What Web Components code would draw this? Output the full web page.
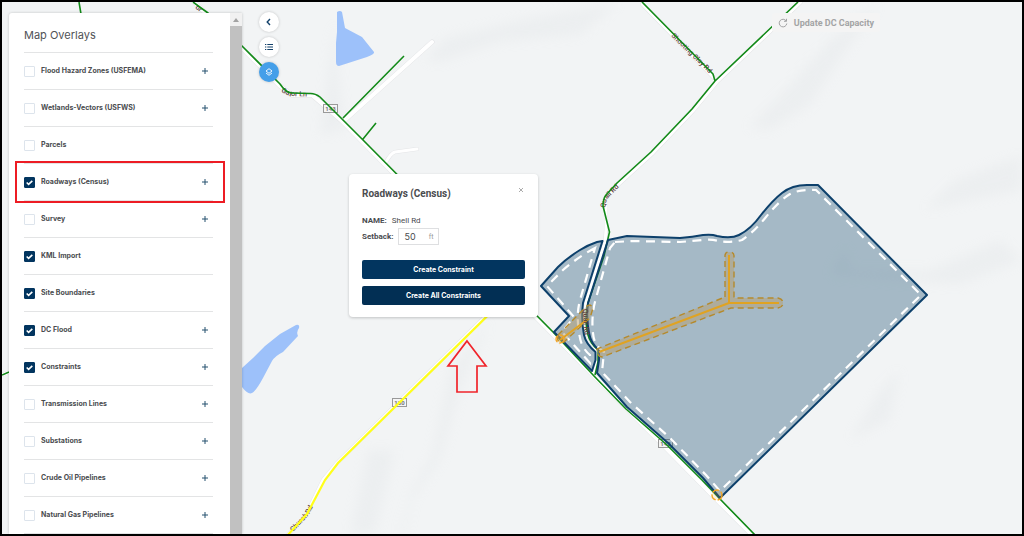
<!DOCTYPE html>
<html lang="en">
<head>
<meta charset="utf-8">
<title>Map Overlays</title>
<style>
html, body { margin: 0; height: 100%; }
body { font-family: Inter, "Liberation Sans", sans-serif; color: #4a4c4f; background: #000; overflow: hidden; }
</style>
</head>
<body>
<map-app></map-app>
<script>
const define = (name, markup, setup) => {
  const template = document.createElement('template');
  template.innerHTML = markup;
  customElements.define(name, class extends HTMLElement {
    constructor() {
      super();
      this.attachShadow({ mode: 'open' }).append(template.content.cloneNode(true));
    }
    connectedCallback() { if (setup) setup(this, this.shadowRoot); }
  });
};

/* Base map: water, roads, labels, site boundary and constraints */
define('site-map', `
<style>
:host { display: block; background: #f2f4f5; }
svg { display: block; width: 100%; height: 100%; }
.case { fill: none; stroke: #e4e5e7; stroke-width: 5; stroke-linejoin: round; stroke-linecap: round; }
.fill { fill: none; stroke: #fff; stroke-width: 4; stroke-linejoin: round; stroke-linecap: round; }
.thin .case { stroke-width: 4; }
.thin .fill { stroke-width: 3; }
.road { fill: none; stroke: #128a18; stroke-width: 1.6; stroke-linejoin: round; }
.water { fill: #9dc1fa; }
.site { fill: #0a4468; fill-opacity: .33; stroke: #0d406b; stroke-width: 2; stroke-linejoin: round; }
.inset { fill: none; stroke: #fff; stroke-width: 2.2; stroke-dasharray: 9 6.500; }
.zone { fill: #b8a070; fill-opacity: .5; stroke: #b58a2c; stroke-width: 1.4; stroke-dasharray: 6 4; }
.line { fill: none; stroke: #e0a322; stroke-width: 2; }
.ring { fill: #f5a623; fill-opacity: .15; stroke: #f5a623; stroke-width: 1.4; stroke-dasharray: 7 2; }
.label { font: 500 7px Roboto, sans-serif; fill: #5d4040; }
.shield rect { fill: #f5f5f5; stroke: #999; }
.shield text { font: 700 6px Roboto, sans-serif; fill: #777; text-anchor: middle; }
.shade { fill: #d3d8db; filter: url(#soft); opacity: .18; }
</style>
<svg viewBox="2 2 1020 532" preserveAspectRatio="xMinYMin slice" role="img" aria-label="Site map">
<defs>
<filter id="soft" x="-50%" y="-50%" width="200%" height="200%"><feGaussianBlur stdDeviation="6"/></filter>
<path id="gator" d="M281 92 L290 96 L322 97"/>
<path id="shoot" d="M671 36 L718 82"/>
<path id="quail" d="M605 208 L607 199 L627 179"/>
<path id="quail2" d="M583 309 L584 330 L588 345"/>
<path id="church" d="M293 532 L309 515 L324 484"/>
</defs>
<g class="shade">
<path d="M425 60 L445 38 L520 20 L620 2 L580 35 L500 42 L440 62Z"/>
<path d="M748 128 L790 85 L830 40 L880 2 L850 45 L810 105 L770 130Z"/>
<path d="M400 534 L412 490 L432 455 L450 370 L490 320 L460 390 L440 460 L412 500 L405 534Z"/>
<path d="M350 534 L368 450 L395 450 L375 534Z"/>
<path d="M830 275 L846 245 L850 270 L930 270 L1000 240 L1022 260 L960 285 L890 280Z"/>
<path d="M925 210 L955 180 L1022 155 L1022 190 L950 205Z"/>
<path d="M850 440 L880 390 L900 370 L890 420Z"/>
<path d="M320 135 L335 20 L340 90 L345 130Z"/>
</g>
<path class="water" d="M337 12 Q340 10 342 12 L345 28 L362 37 L374 52 Q375 54 367 57 L339 66 Q336 66 336 62 V43 L337 32Z"/>
<path class="water" d="M225 382 L242 368 L253 358 L265 346 L280 334 L296 325 Q300 324 299 328 Q296 332 298 336 L283 352 Q275 356 272 361 L263 378 Q256 391 252 393 Q248 395 242 387Z"/>
<path class="case" d="M192 0 L242 48 L280 86 L292 95 L312 95 L342 121 L594 376 L626 408 L662 444 L720 503 L755 538 M346 119 L432 42"/>
<g class="thin"><path class="case" d="M386 162 Q391 153 395 152 L417 149 M642 4 L714 78 M801 2 L717 82 L693 111 L652 154 L618 185 L606 198 L606 230 L605 242 L586 303 L585 320 L588 336 L597 351 V360 L594 372 M500 302 L337 463 L323 480 L306 515 L286 537 M2 375 L9 372"/></g>
<path class="fill" d="M192 0 L242 48 L280 86 L292 95 L312 95 L342 121 L594 376 L626 408 L662 444 L720 503 L755 538 M346 119 L432 42"/>
<g class="thin"><path class="fill" d="M386 162 Q391 153 395 152 L417 149 M642 4 L714 78 M801 2 L717 82 L693 111 L652 154 L618 185 L606 198 L606 230 L605 242 L586 303 L585 320 L588 336 L597 351 V360 L594 372 M500 302 L337 463 L323 480 L306 515 L286 537 M2 375 L9 372"/></g>
<g class="shield">
<g><rect x="323.500" y="104.500" width="14" height="8"/><text x="330.500" y="111">143</text></g>
<g><rect x="392.500" y="398.500" width="14" height="8"/><text x="399.500" y="405">130</text></g>
<g><rect x="658.500" y="439.500" width="14" height="8"/><text x="665.500" y="446">143</text></g>
</g>
<g class="label">
<text><textPath href="#gator">Gator Ln</textPath></text>
<text><textPath href="#shoot">Shooting Clay Rd</textPath></text>
<text><textPath href="#quail">Quail Rd</textPath></text>
<text><textPath href="#church">Church Rd</textPath></text>
<text x="195" y="8" transform="rotate(40 195 8)">or</text>
</g>
<path class="road" d="M193 2 L208 13 L242 46 L280 84 Q286 93 292 93 L309 93.500 Q315 93 320 97 L342 119 L363 140 L553 332 L594 376 L626 409 L667 445 L702 480 L720 499 L756 536 M343 118 L404 56 M363 139 L376 123 M642 2 L713 74 L715 81 M798 2 L715 81 L692 109 L651 152 L617 183 L606 195 Q603 199 603 206 L609.500 232 L604 256 L588 303 Q584 320 588 335 Q590 343 598 350 V362 L595 375 M2 375 L9 372 M79 2 L82 20"/>
<path class="site" d="M602.500 241 L597 242 Q588 245 580 250 Q567 258 558 267 L541 286 L569 316 L554 332 L592 371 L595.500 360 V352 Q586 344 584 335 Q581 320 583 303Z"/>
<path class="site" d="M608 240 L627 236 L680 238 Q693 237 703 235 Q712 234 717 236 Q731 239 739 235 Q751 229 761 215 Q773 200 782 193 Q792 185 807 185 L818 185 L927 295 L720 498 L703 478 L668 443 L627 407 L597 373 L599 360 V350 Q591 344 589 333 Q586 318 588 303Z"/>
<path class="inset" d="M595 248 Q578 257 563 270 L547 286 L574 317 L562 332 L590 363 V355 Q580 347 579 331 Q576 315 580 300Z"/>
<path class="inset" d="M615 242 L633 241 L680 242 L703 240 Q712 239 718 241 Q730 243 742 240 Q754 232 766 217 Q780 200 790 194 Q800 189 816 190 L921 295 L720 491 L706 475 L670 438 L630 402 L602 372 L604 352 Q594 346 593 333 Q591 315 596 298 L610 248Z"/>
<path class="zone" d="M725 297 V256 Q725 252 729 252 Q734 252 734 256 V298 H778 Q783 299 783 303 Q783 307 778 308 H731 L602 357 Q596 356 597 349Z"/>
<path class="zone" d="M558 335 L585 308 Q590 302 593 308 L590 318 L564 342 Q556 344 558 335Z"/>
<path class="line" d="M599 352 L729 303 V255 M729 303 H779 M560 340 L588 319"/>
<circle class="ring" cx="560" cy="339" r="4"/><circle class="ring" cx="717" cy="495" r="5"/>
<text class="label"><textPath href="#quail2">Quail Rd</textPath></text>
<path d="M537 267 L338 463 L325 480 L307 514 L286 537" fill="none" stroke="#ffff1a" stroke-width="2.2"/>
<path d="M467 341 L486 366 H477 V392 H457 V366 H448Z" fill="none" stroke="#f0242b" stroke-width="1.700"/>
</svg>`);

/* One overlay row: tick box, name and, if expandable, a plus button */
define('overlay-item', `
<style>
:host { display: flex; align-items: center; position: relative; height: 36px; border-bottom: 1px solid #e3e4e5; }
label { display: flex; align-items: center; gap: 6px; flex: 1; font-size: 7px; font-weight: 700; line-height: 10px; }
input { appearance: none; box-sizing: border-box; width: 11px; height: 11px; margin: 0; border: 1px solid #dde4ec; border-radius: 1px; background: #fff; }
input:checked { border-color: #02355f; background: #02355f url("data:image/svg+xml,%3Csvg xmlns='http://www.w3.org/2000/svg' viewBox='0 0 8 8'%3E%3Cpath d='M1.500 4l1.700 1.700L6.500 2.500' fill='none' stroke='white' stroke-width='1.400'/%3E%3C/svg%3E"); }
button { width: 16px; height: 16px; padding: 0; border: 0; background: none; display: grid; place-items: center; }
button[hidden] { display: none; }
:host([highlighted])::after { content: ""; position: absolute; inset: -3px -12px -3px -9px; border: 2px solid #ed1c24; pointer-events: none; }
</style>
<label><input type="checkbox"><span><slot></slot></span></label>
<button type="button" aria-label="Expand"><svg width="6" height="6" viewBox="0 0 6 6"><path d="M3 0V6M0 3H6" stroke="#25516f"/></svg></button>`,
(el, root) => {
  root.querySelector('input').checked = el.hasAttribute('checked');
  root.querySelector('button').hidden = !el.hasAttribute('expandable');
});

define('overlay-panel', `
<style>
:host { display: flex; background: #fff; border-radius: 3px 0 0 0; box-shadow: 0 0 3px #0003; overflow: hidden; }
.list { flex: 1; padding: 14px 17px 0 15px; }
h1 { margin: 0; padding-bottom: 9px; font-size: 11px; line-height: 16px; font-weight: 400; color: #505256; border-bottom: 1px solid #e3e4e5; }
.bar { width: 12px; background: #c1c1c1; }
.up { height: 13px; background: #f1f1f1; display: grid; place-items: center; }
</style>
<div class="list"><h1>Map Overlays</h1><slot></slot></div>
<div class="bar"><div class="up"><svg width="6" height="4" viewBox="0 0 6 4"><path d="M0 4L3 0L6 4Z" fill="#a3a3a3"/></svg></div></div>`);

define('round-button', `
<style>
:host { display: block; }
button { display: grid; place-items: center; width: 20px; height: 20px; padding: 0; border: 0; border-radius: 50%; background: #fff; color: #14426b; box-shadow: 0 0 3px #0003; }
:host([active]) button { background: #459fe9; color: #fff; }
</style>
<button type="button"><slot></slot></button>`,
(el, root) => root.querySelector('button').setAttribute('aria-label', el.getAttribute('name')));

define('update-button', `
<style>
:host { display: block; }
button { display: flex; align-items: center; gap: 6px; height: 19px; padding: 0 6px; border: 0; border-radius: 3px; background: #f4f4f4; color: #a3a4a5; font: 700 9px Roboto, sans-serif; }
</style>
<button type="button" disabled><svg width="10" height="10" viewBox="0 0 10 10" fill="none" stroke="#a3a4a5"><path d="M8.200 3A3.800 3.800 0 1 0 8.800 5.500M8.500 .8V3.300H6"/></svg><slot></slot></button>`);

define('feature-popup', `
<style>
:host { display: block; box-sizing: border-box; padding: 12px 13px; border-radius: 4px; background: #fff; box-shadow: 0 1px 3px #0003; font-family: Roboto, sans-serif; }
header { display: flex; justify-content: space-between; align-items: start; }
h2 { margin: 0; font-size: 10px; line-height: 16px; font-weight: 700; }
.close { width: 8px; height: 8px; padding: 0; border: 0; background: none; display: grid; place-items: center; }
dl, dt, dd { margin: 0; }
dl { display: flex; gap: 5px; margin-top: 14px; font-size: 8px; line-height: 10px; }
dt, label { font-weight: 700; }
.setback { display: flex; align-items: center; gap: 5px; margin-top: 2px; font-size: 8px; }
.field { display: flex; align-items: center; box-sizing: border-box; width: 41px; height: 17px; padding: 0 5px; border: 1px solid #dedfe1; }
input { min-width: 0; flex: 1; padding: 0; border: 0; outline: 0; font: 9px Inter, sans-serif; color: #4a4c4f; }
.field span { font-size: 7px; color: #999; }
.actions { display: grid; gap: 7px; margin-top: 15px; }
.actions button { height: 19px; padding: 0; border: 0; border-radius: 2px; background: #02355f; color: #fff; font: 700 7px Inter, sans-serif; }
.actions button + button { background: #022f54; }
</style>
<header><h2>Roadways (Census)</h2><button class="close" type="button" aria-label="Close"><svg width="4" height="4" viewBox="0 0 4 4"><path d="M0 0L4 4M4 0L0 4" stroke="#888" stroke-width=".7"/></svg></button></header>
<dl><dt>NAME:</dt><dd>Shell Rd</dd></dl>
<div class="setback"><label for="setback">Setback:</label><div class="field"><input id="setback" value="50"><span>ft</span></div></div>
<div class="actions"><button type="button">Create Constraint</button><button type="button">Create All Constraints</button></div>`);

define('map-app', `
<style>
:host { display: grid; grid-template: 100% / 100%; position: relative; box-sizing: border-box; height: 100vh; border: 2px solid #000; overflow: hidden; }
site-map, .chrome { grid-area: 1 / 1; min-width: 0; min-height: 0; }
.chrome { position: relative; display: grid; grid-template-columns: 233px auto 1fr; column-gap: 16px; padding: 11px 0 0 7px; }
.tools { display: flex; flex-direction: column; gap: 5px; padding-left: 1px; margin-top: -1px; }
overlay-panel { min-height: 0; }
update-button { justify-self: end; margin-right: 142px; }
feature-popup { position: absolute; left: 347px; top: 172px; width: 189px; }
</style>
<site-map></site-map>
<div class="chrome">
<overlay-panel>
<overlay-item expandable>Flood Hazard Zones (USFEMA)</overlay-item>
<overlay-item expandable>Wetlands-Vectors (USFWS)</overlay-item>
<overlay-item>Parcels</overlay-item>
<overlay-item checked expandable highlighted>Roadways (Census)</overlay-item>
<overlay-item expandable>Survey</overlay-item>
<overlay-item checked>KML Import</overlay-item>
<overlay-item checked>Site Boundaries</overlay-item>
<overlay-item checked expandable>DC Flood</overlay-item>
<overlay-item checked expandable>Constraints</overlay-item>
<overlay-item expandable>Transmission Lines</overlay-item>
<overlay-item expandable>Substations</overlay-item>
<overlay-item expandable>Crude Oil Pipelines</overlay-item>
<overlay-item expandable>Natural Gas Pipelines</overlay-item>
</overlay-panel>
<div class="tools">
<round-button name="Back"><svg width="8" height="8" viewBox="0 0 8 8" fill="none" stroke="currentColor" stroke-width="1.400"><path d="M5 1L2.200 4L5 7"/></svg></round-button>
<round-button name="List"><svg width="8" height="8" viewBox="0 0 8 8" stroke="currentColor" stroke-width="1.200"><path d="M0 1.500H1.300M2.300 1.500H8M0 4H1.300M2.300 4H8M0 6.500H1.300M2.300 6.500H8"/></svg></round-button>
<round-button name="Layers" active><svg width="8" height="8" viewBox="0 0 8 8" fill="none" stroke="currentColor" stroke-width=".9" stroke-linejoin="round"><path d="M4 .7L7 3L4 5.300L1 3ZM1 5L4 7.300L7 5"/></svg></round-button>
</div>
<update-button>Update DC Capacity</update-button>
</div>
<feature-popup></feature-popup>`);
</script>
</body>
</html>
